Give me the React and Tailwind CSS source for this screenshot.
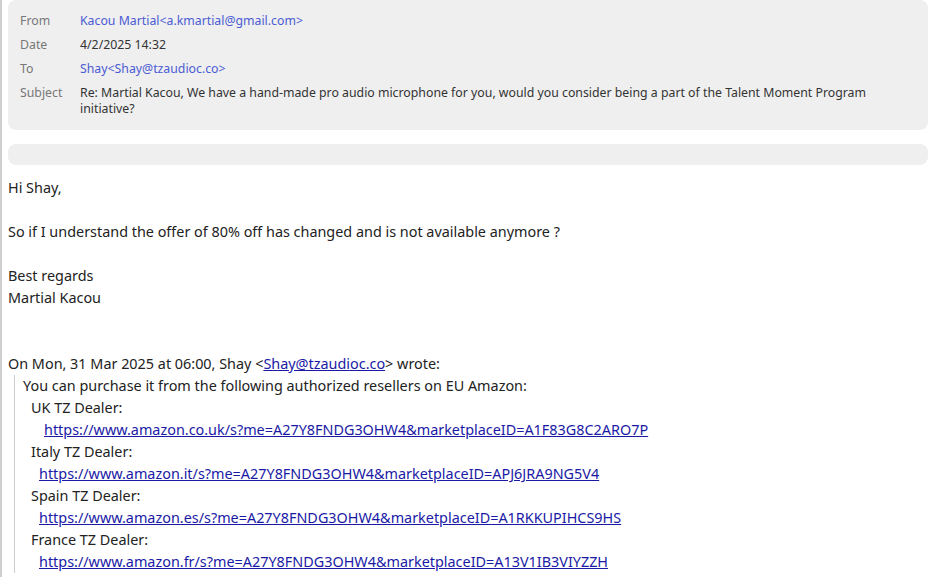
const headerRows = [
  { label: 'From', value: 'Kacou Martial<a.kmartial@gmail.com>', link: true },
  { label: 'Date', value: '4/2/2025 14:32' },
  { label: 'To', value: 'Shay<Shay@tzaudioc.co>', link: true },
];

const dealers = [
  { name: 'UK TZ Dealer:', url: 'https://www.amazon.co.uk/s?me=A27Y8FNDG3OHW4&marketplaceID=A1F83G8C2ARO7P', indent: 'pl-[13px]' },
  { name: 'Italy TZ Dealer:', url: 'https://www.amazon.it/s?me=A27Y8FNDG3OHW4&marketplaceID=APJ6JRA9NG5V4', indent: 'pl-2' },
  { name: 'Spain TZ Dealer:', url: 'https://www.amazon.es/s?me=A27Y8FNDG3OHW4&marketplaceID=A1RKKUPIHCS9HS', indent: 'pl-2' },
  { name: 'France TZ Dealer:', url: 'https://www.amazon.fr/s?me=A27Y8FNDG3OHW4&marketplaceID=A13V1IB3VIYZZH', indent: 'pl-2' },
];

export default function App() {
  return (
    <div className="w-[928px] h-[577px] overflow-hidden bg-white border-l-2 border-[#cfcfcf] pl-[6px] font-['Noto_Sans',sans-serif]">
      {/* Header */}
      <div className="bg-[#efefef] rounded-lg pt-[9px] pb-[13px] px-3 text-[12.3px] text-[#333]">
        {headerRows.map((r) => (
          <div key={r.label} className="flex h-6 items-center">
            <span className="w-[60px] shrink-0 text-[#777]">{r.label}</span>
            <span className={r.link ? 'text-[#4a5bd4]' : ''}>{r.value}</span>
          </div>
        ))}
        <div className="flex pt-1 leading-4">
          <span className="w-[60px] shrink-0 text-[#777]">Subject</span>
          <span className="pr-6">
            Re: Martial Kacou, We have a hand-made pro audio microphone for you, would you consider being a part of the Talent Moment Program initiative?
          </span>
        </div>
      </div>

      <div className="mt-[14px] h-[21px] bg-[#efefef] rounded-lg" />

      {/* Body */}
      <div className="mt-[12px] text-[14.4px] leading-[22px] text-[#222]">
        <p>Hi Shay,</p>
        <p>&nbsp;</p>
        <p>So if I understand the offer of 80% off has changed and is not available anymore ?</p>
        <p>&nbsp;</p>
        <p>Best regards</p>
        <p>Martial Kacou</p>
        <p>&nbsp;</p>
        <p>&nbsp;</p>
        <p>
          On Mon, 31 Mar 2025 at 06:00, Shay &lt;
          <a className="text-[#1a1aa6] underline">Shay@tzaudioc.co</a>
          &gt; wrote:
        </p>
        <div className="ml-[6px] border-l border-[#ccc] pl-2">
          <p>You can purchase it from the following authorized resellers on EU Amazon:</p>
          <div className="pl-2">
            {dealers.map((d) => (
              <div key={d.name}>
                <p>{d.name}</p>
                <p className={d.indent}>
                  <a className="text-[#1a1aa6] underline">{d.url}</a>
                </p>
              </div>
            ))}
          </div>
        </div>
      </div>
    </div>
  );
}
